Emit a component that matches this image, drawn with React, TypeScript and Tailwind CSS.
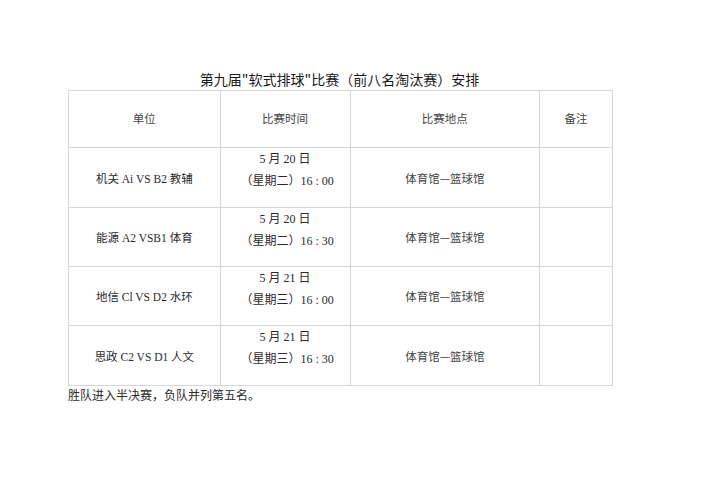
import React from 'react';

const ROWS = [
  { team: '机关 Ai VS B2 教辅', date: '5 月 20 日', time: '（星期二）16 : 00' },
  { team: '能源 A2 VSB1 体育', date: '5 月 20 日', time: '（星期二）16 : 30' },
  { team: '地信 Cl VS D2 水环', date: '5 月 21 日', time: '（星期三）16 : 00' },
  { team: '思政 C2 VS D1 人文', date: '5 月 21 日', time: '（星期三）16 : 30' },
];

const serif = { fontFamily: '"Liberation Serif", "Noto Sans CJK SC", serif' };

const App: React.FC = () => {
  return (
    <div className="w-[707px] h-[500px] bg-white text-[#2a2a2a]" style={{ fontFamily: '"Noto Sans CJK SC", sans-serif' }}>
      <div className="pt-[69px] pl-[68px] w-[613px]">
        <h1 className="text-center text-[14px] leading-[20px] text-[#1a1a1a] pr-[2px]">
          第九届"软式排球"比赛（前八名淘汰赛）安排
        </h1>
        <table className="table-fixed border-collapse text-[11.5px] mt-[1px]">
          <colgroup>
            <col className="w-[152px]" />
            <col className="w-[130px]" />
            <col className="w-[190px]" />
            <col className="w-[73px]" />
          </colgroup>
          <thead>
            <tr className="h-[57px]">
              {['单位', '比赛时间', '比赛地点', '备注'].map((h) => (
                <th key={h} className="border border-[#d6d6d6] font-normal text-center align-middle text-[#444]">
                  {h}
                </th>
              ))}
            </tr>
          </thead>
          <tbody>
            {ROWS.map((r, i) => (
              <tr key={r.team} className={i === 0 || i === 3 ? 'h-[60px]' : 'h-[59px]'}>
                <td className="border border-[#d6d6d6] text-center align-middle pt-[4px]" style={serif}>
                  {r.team}
                </td>
                <td className="border border-[#d6d6d6] text-center align-top" style={serif}>
                  <div className="leading-[22px] text-[12px]">{r.date}</div>
                  <div className="leading-[22px] text-[12px] pl-[4px]">{r.time}</div>
                </td>
                <td className="border border-[#d6d6d6] text-center align-middle pt-[2px] text-[#444]">
                  体育馆—篮球馆
                </td>
                <td className="border border-[#d6d6d6]"></td>
              </tr>
            ))}
          </tbody>
        </table>
        <p className="text-[12px] leading-[16px] mt-[1px]">胜队进入半决赛，负队并列第五名。</p>
      </div>
    </div>
  );
};

export default App;
